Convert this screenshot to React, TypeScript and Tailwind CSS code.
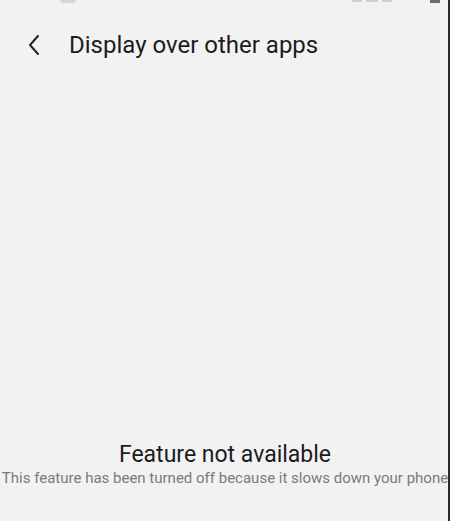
import React from 'react'

export default function App() {
    return (
        <div className="relative flex h-[521px] w-[450px] flex-col overflow-hidden bg-[#f2f2f2] font-['Roboto',sans-serif]">
            {/* status bar, mostly scrolled off */}
            <div className="flex h-[6px] items-start">
                <div className="ml-[60px] mt-[-3px] h-[6px] w-[16px] rounded-sm bg-[#d6d6d6]" />
                <div className="ml-auto mt-[-3px] flex gap-[4px]">
                    <div className="h-[5px] w-[10px] bg-[#cfcfcf]" />
                    <div className="h-[5px] w-[12px] bg-[#cfcfcf]" />
                    <div className="h-[5px] w-[10px] bg-[#cfcfcf]" />
                </div>
                <div className="ml-[38px] mr-[10px] mt-[-3px] h-[6px] w-[10px] bg-[#6e6e6e]" />
            </div>

            <div className="flex h-[78px] items-center pb-[1px]">
                <button className="ml-[24px] flex h-[24px] w-[20px] items-center justify-center">
                    <svg width="14" height="22" viewBox="0 0 14 22" fill="none">
                        <path d="M11 2 L3 11 L11 20" stroke="#222" strokeWidth="2" strokeLinecap="round" strokeLinejoin="round" />
                    </svg>
                </button>
                <h1 className="ml-[25px] text-[24px] leading-none text-[#1c1c1c]">Display over other apps</h1>
            </div>

            <div className="flex-1" />

            <div className="flex flex-col items-center pb-[34px]">
                <p className="text-[23px] leading-[26px] text-[#1c1c1c]">Feature not available</p>
                <p className="mt-[1px] whitespace-nowrap text-[15px] leading-[18px] text-[#7a7a7a]">
                    This feature has been turned off because it slows down your phone
                </p>
            </div>

            <div className="absolute right-0 top-0 h-full w-[2px] bg-[#2a2a2a]" />
        </div>
    )
}
